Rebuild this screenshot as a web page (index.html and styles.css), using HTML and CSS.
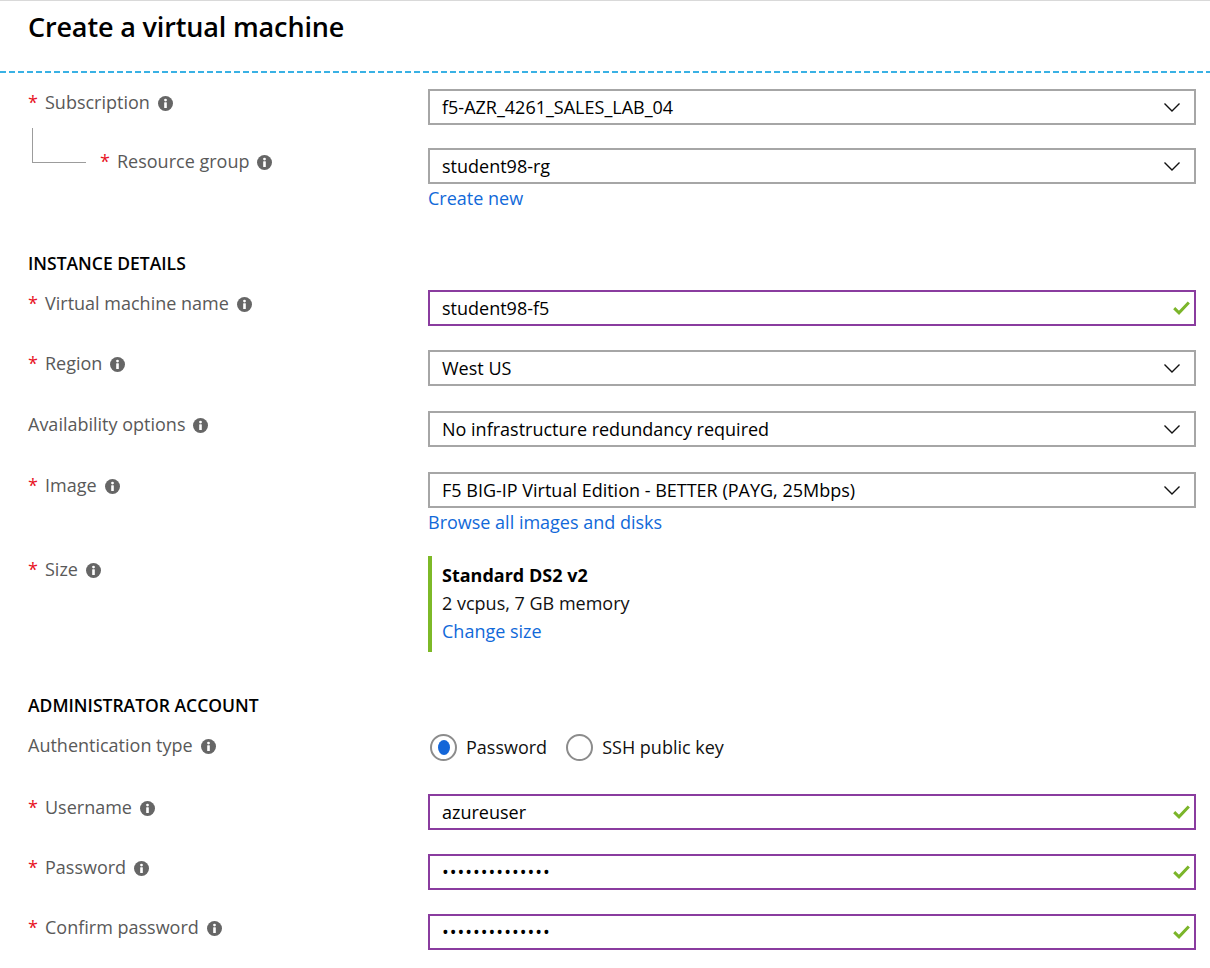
FILE: index.html
```html
<!DOCTYPE html>
<html lang="en">
<head>
<meta charset="utf-8">
<title>Create a virtual machine</title>
<link rel="stylesheet" href="styles.css">
</head>
<body>
<header class="blade-header">
  <h1 class="title">Create a virtual machine</h1>
</header>
<div class="divider"></div>

<main class="form">
  <div class="row">
    <div class="label"><span class="req">*</span>Subscription<svg class="info" viewBox="0 0 16 16"><circle cx="8" cy="8" r="8" fill="#666"/><circle cx="8" cy="4.3" r="1.5" fill="#fff"/><rect x="6.6" y="6.7" width="2.8" height="6.2" rx="0.4" fill="#fff"/></svg></div>
    <div class="control">
      <div class="select"><span>f5-AZR_4261_SALES_LAB_04</span><svg class="chev" viewBox="0 0 16 9"><path d="M0.5 0.5 L8 8 L15.5 0.5" fill="none" stroke="#111" stroke-width="1.4"/></svg></div>
    </div>
  </div>

  <div class="row row-rg">
    <div class="label label-tree"><span class="tree"></span><span><span class="req">*</span>Resource group<svg class="info" viewBox="0 0 16 16"><circle cx="8" cy="8" r="8" fill="#666"/><circle cx="8" cy="4.3" r="1.5" fill="#fff"/><rect x="6.6" y="6.7" width="2.8" height="6.2" rx="0.4" fill="#fff"/></svg></span></div>
    <div class="control">
      <div class="select"><span>student98-rg</span><svg class="chev" viewBox="0 0 16 9"><path d="M0.5 0.5 L8 8 L15.5 0.5" fill="none" stroke="#111" stroke-width="1.4"/></svg></div>
      <a class="link" href="#">Create new</a>
    </div>
  </div>

  <h2 class="section-title section-instance">INSTANCE DETAILS</h2>

  <div class="row row-first">
    <div class="label"><span class="req">*</span>Virtual machine name<svg class="info" viewBox="0 0 16 16"><circle cx="8" cy="8" r="8" fill="#666"/><circle cx="8" cy="4.3" r="1.5" fill="#fff"/><rect x="6.6" y="6.7" width="2.8" height="6.2" rx="0.4" fill="#fff"/></svg></div>
    <div class="control">
      <div class="select valid"><span>student98-f5</span><svg class="check" viewBox="0 0 17 14"><path d="M1.2 7.2 L6 11.8 L15.8 1.5" fill="none" stroke="#7bb52a" stroke-width="3"/></svg></div>
    </div>
  </div>

  <div class="row row-24">
    <div class="label"><span class="req">*</span>Region<svg class="info" viewBox="0 0 16 16"><circle cx="8" cy="8" r="8" fill="#666"/><circle cx="8" cy="4.3" r="1.5" fill="#fff"/><rect x="6.6" y="6.7" width="2.8" height="6.2" rx="0.4" fill="#fff"/></svg></div>
    <div class="control">
      <div class="select"><span>West US</span><svg class="chev" viewBox="0 0 16 9"><path d="M0.5 0.5 L8 8 L15.5 0.5" fill="none" stroke="#111" stroke-width="1.4"/></svg></div>
    </div>
  </div>

  <div class="row row-25">
    <div class="label">Availability options<svg class="info" viewBox="0 0 16 16"><circle cx="8" cy="8" r="8" fill="#666"/><circle cx="8" cy="4.3" r="1.5" fill="#fff"/><rect x="6.6" y="6.7" width="2.8" height="6.2" rx="0.4" fill="#fff"/></svg></div>
    <div class="control">
      <div class="select"><span>No infrastructure redundancy required</span><svg class="chev" viewBox="0 0 16 9"><path d="M0.5 0.5 L8 8 L15.5 0.5" fill="none" stroke="#111" stroke-width="1.4"/></svg></div>
    </div>
  </div>

  <div class="row row-25">
    <div class="label"><span class="req">*</span>Image<svg class="info" viewBox="0 0 16 16"><circle cx="8" cy="8" r="8" fill="#666"/><circle cx="8" cy="4.3" r="1.5" fill="#fff"/><rect x="6.6" y="6.7" width="2.8" height="6.2" rx="0.4" fill="#fff"/></svg></div>
    <div class="control">
      <div class="select"><span>F5 BIG-IP Virtual Edition - BETTER (PAYG, 25Mbps)</span><svg class="chev" viewBox="0 0 16 9"><path d="M0.5 0.5 L8 8 L15.5 0.5" fill="none" stroke="#111" stroke-width="1.4"/></svg></div>
      <a class="link" href="#">Browse all images and disks</a>
    </div>
  </div>

  <div class="row row-size">
    <div class="label"><span class="req">*</span>Size<svg class="info" viewBox="0 0 16 16"><circle cx="8" cy="8" r="8" fill="#666"/><circle cx="8" cy="4.3" r="1.5" fill="#fff"/><rect x="6.6" y="6.7" width="2.8" height="6.2" rx="0.4" fill="#fff"/></svg></div>
    <div class="control">
      <div class="size-card">
        <div class="size-name">Standard DS2 v2</div>
        <div class="size-spec">2 vcpus, 7 GB memory</div>
        <a class="size-link" href="#">Change size</a>
      </div>
    </div>
  </div>

  <h2 class="section-title section-admin">ADMINISTRATOR ACCOUNT</h2>

  <div class="row row-auth">
    <div class="label label-auth">Authentication type<svg class="info" viewBox="0 0 16 16"><circle cx="8" cy="8" r="8" fill="#666"/><circle cx="8" cy="4.3" r="1.5" fill="#fff"/><rect x="6.6" y="6.7" width="2.8" height="6.2" rx="0.4" fill="#fff"/></svg></div>
    <div class="control">
      <div class="radio-group">
        <label class="radio"><span class="radio-circle"><span class="radio-dot"></span></span>Password</label>
        <label class="radio"><span class="radio-circle"></span>SSH public key</label>
      </div>
    </div>
  </div>

  <div class="row row-user">
    <div class="label"><span class="req">*</span>Username<svg class="info" viewBox="0 0 16 16"><circle cx="8" cy="8" r="8" fill="#666"/><circle cx="8" cy="4.3" r="1.5" fill="#fff"/><rect x="6.6" y="6.7" width="2.8" height="6.2" rx="0.4" fill="#fff"/></svg></div>
    <div class="control">
      <div class="select valid"><span>azureuser</span><svg class="check" viewBox="0 0 17 14"><path d="M1.2 7.2 L6 11.8 L15.8 1.5" fill="none" stroke="#7bb52a" stroke-width="3"/></svg></div>
    </div>
  </div>

  <div class="row row-24">
    <div class="label"><span class="req">*</span>Password<svg class="info" viewBox="0 0 16 16"><circle cx="8" cy="8" r="8" fill="#666"/><circle cx="8" cy="4.3" r="1.5" fill="#fff"/><rect x="6.6" y="6.7" width="2.8" height="6.2" rx="0.4" fill="#fff"/></svg></div>
    <div class="control">
      <div class="select valid"><span class="dots">••••••••••••••</span><svg class="check" viewBox="0 0 17 14"><path d="M1.2 7.2 L6 11.8 L15.8 1.5" fill="none" stroke="#7bb52a" stroke-width="3"/></svg></div>
    </div>
  </div>

  <div class="row row-24">
    <div class="label"><span class="req">*</span>Confirm password<svg class="info" viewBox="0 0 16 16"><circle cx="8" cy="8" r="8" fill="#666"/><circle cx="8" cy="4.3" r="1.5" fill="#fff"/><rect x="6.6" y="6.7" width="2.8" height="6.2" rx="0.4" fill="#fff"/></svg></div>
    <div class="control">
      <div class="select valid"><span class="dots">••••••••••••••</span><svg class="check" viewBox="0 0 17 14"><path d="M1.2 7.2 L6 11.8 L15.8 1.5" fill="none" stroke="#7bb52a" stroke-width="3"/></svg></div>
    </div>
  </div>
</main>
</body>
</html>
```

FILE: styles.css
```css
html, body {
  margin: 0;
  padding: 0;
}

body {
  font-family: "Open Sans", "Noto Sans", "DejaVu Sans", sans-serif;
  font-size: 18px;
  color: #111;
  background: #fff;
  overflow: hidden;
}

.blade-header {
  box-sizing: border-box;
  height: 71px;
  border-top: 1px solid #d9d9d9;
  padding: 8px 0 0 28px;
}

.title {
  margin: 0;
  font-size: 27px;
  line-height: 36px;
  font-weight: 600;
  letter-spacing: -0.15px;
  color: #000;
}

.divider {
  height: 2px;
  background: repeating-linear-gradient(90deg, #39b1e4 0 6px, transparent 6px 9px);
}

.form {
  padding: 16px 14px 0 28px;
}

.row {
  display: flex;
  align-items: flex-start;
}

.row-rg { margin-top: 23px; }
.row-first { margin-top: 16px; }
.row-24 { margin-top: 24px; }
.row-25 { margin-top: 25px; }
.row-size { margin-top: 23px; }
.row-auth { margin-top: 17px; }
.row-user { margin-top: 33px; }

.label {
  flex: none;
  width: 400px;
  padding-top: 2px;
  line-height: 22px;
  color: #595959;
  white-space: nowrap;
}

.label-tree {
  display: flex;
  align-items: flex-start;
}

.label-auth {
  padding-top: 1px;
}

.tree {
  flex: none;
  box-sizing: border-box;
  width: 54px;
  height: 35px;
  margin: -22px 14px 0 4px;
  border-left: 1px solid #9c9c9c;
  border-bottom: 1px solid #9c9c9c;
}

.req {
  display: inline-block;
  width: 17px;
  color: #e81123;
}

.info {
  width: 15px;
  height: 15px;
  margin-left: 8px;
  vertical-align: -2px;
}

.control {
  flex: 1;
  min-width: 0;
}

.select {
  box-sizing: border-box;
  height: 36px;
  border: 2px solid #a6a6a6;
  padding: 0 14px 0 12px;
  display: flex;
  align-items: center;
  justify-content: space-between;
  line-height: 32px;
  color: #000;
}

.select.valid {
  border-color: #8a3c9f;
  padding-right: 4px;
}

.chev {
  width: 16px;
  height: 9px;
  flex: none;
}

.check {
  width: 17px;
  height: 14px;
  flex: none;
}

.dots {
  letter-spacing: 1px;
}

.link {
  display: block;
  margin-top: 3px;
  line-height: 22px;
  color: #1169d9;
  text-decoration: none;
}

.section-title {
  margin: 0;
  font-size: 17.5px;
  line-height: 22px;
  font-weight: 600;
  color: #000;
}

.section-instance { margin-top: 43px; }
.section-admin { margin-top: 42px; }

.size-card {
  border-left: 4px solid #7db927;
  padding: 5px 0 7px 10px;
  line-height: 28px;
  color: #111;
}

.size-name {
  font-weight: 700;
  color: #000;
}

.size-link {
  color: #1169d9;
  text-decoration: none;
}

.radio-group {
  display: flex;
  align-items: center;
  height: 28px;
  padding-left: 2px;
}

.radio {
  display: flex;
  align-items: center;
  gap: 9px;
  color: #111;
  line-height: 22px;
}

.radio + .radio {
  margin-left: 19px;
}

.radio-circle {
  box-sizing: border-box;
  width: 27px;
  height: 27px;
  border: 2px solid #8c8c8c;
  border-radius: 50%;
  display: flex;
  align-items: center;
  justify-content: center;
}

.radio-dot {
  width: 12px;
  height: 15px;
  border-radius: 50%;
  background: #1466d8;
}
```
